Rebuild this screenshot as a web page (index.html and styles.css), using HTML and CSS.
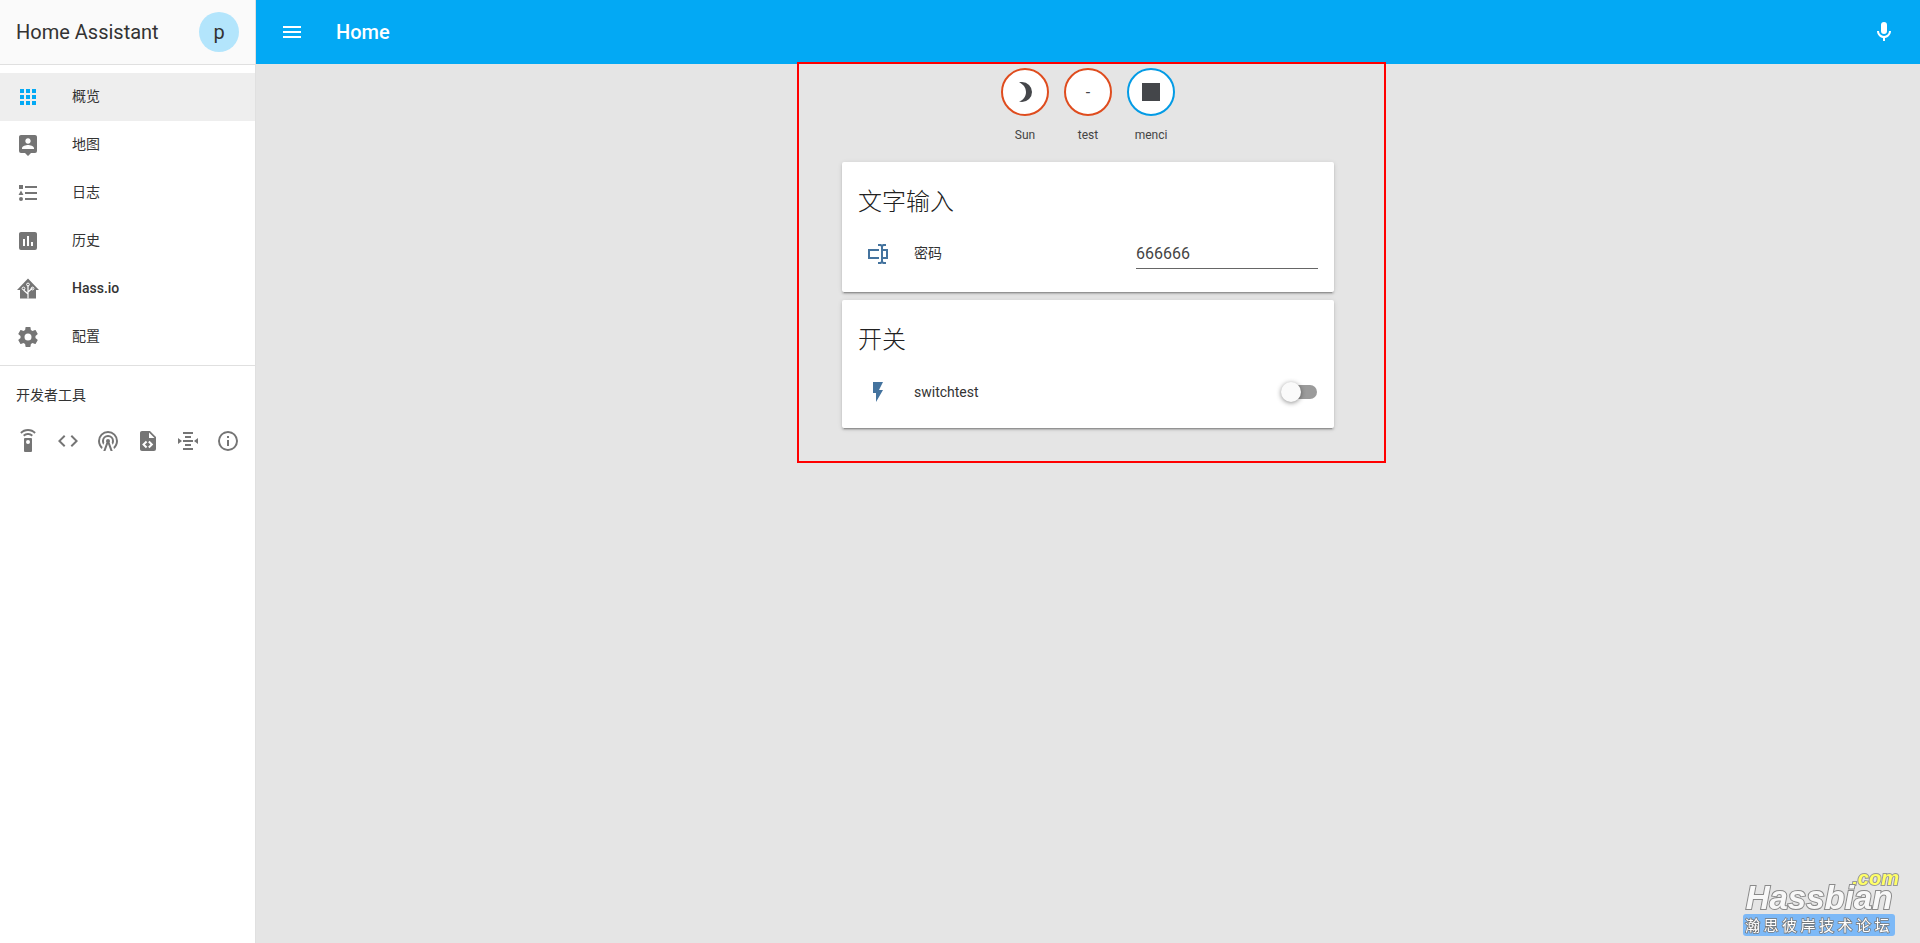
FILE: index.html
```html
<!DOCTYPE html>
<html lang="en">
<head>
    <meta charset="UTF-8">
    <meta name="viewport" content="width=device-width, initial-scale=1.0">
    <title>Home Assistant</title>
    <link rel="stylesheet" href="styles.css">
</head>
<body>
    <aside class="sidebar">
        <div class="sidebar-head">
            <span class="brand">Home Assistant</span>
            <span class="avatar">p</span>
        </div>
        <nav class="nav">
            <a class="nav-item selected">
                <svg class="icon" viewBox="0 0 24 24"><path d="M16,20H20V16H16M16,14H20V10H16M10,8H14V4H10M16,8H20V4H16M10,14H14V10H10M4,14H8V10H4M4,20H8V16H4M10,20H14V16H10M4,8H8V4H4V8Z"/></svg>
                <span class="cjk">概览</span>
            </a>
            <a class="nav-item">
                <svg class="icon" viewBox="0 0 24 24"><path d="M18,16H6V15.1C6,13.1 10,12 12,12C14,12 18,13.1 18,15.1M12,5.3C13.5,5.3 14.7,6.5 14.7,8C14.7,9.5 13.5,10.7 12,10.7C10.5,10.7 9.3,9.5 9.3,8C9.3,6.5 10.5,5.3 12,5.3M19,2H5C3.89,2 3,2.89 3,4V18A2,2 0 0,0 5,20H9L12,23L15,20H19A2,2 0 0,0 21,18V4C21,2.89 20.1,2 19,2Z"/></svg>
                <span class="cjk">地图</span>
            </a>
            <a class="nav-item">
                <svg class="icon" viewBox="0 0 24 24"><path d="M5,9.5L7.5,14H2.5L5,9.5M3,4H7V8H3V4M5,20A2,2 0 0,0 7,18A2,2 0 0,0 5,16A2,2 0 0,0 3,18A2,2 0 0,0 5,20M9,5V7H21V5H9M9,19H21V17H9V19M9,13H21V11H9V13Z"/></svg>
                <span class="cjk">日志</span>
            </a>
            <a class="nav-item">
                <svg class="icon" viewBox="0 0 24 24"><path d="M17,17H15V13H17M13,17H11V7H13M9,17H7V10H9M19,3H5C3.89,3 3,3.89 3,5V19A2,2 0 0,0 5,21H19A2,2 0 0,0 21,19V5C21,3.89 20.1,3 19,3Z"/></svg>
                <span class="cjk">历史</span>
            </a>
            <a class="nav-item">
                <svg class="icon" viewBox="0 0 24 24">
                    <path d="M12,1.5L1,13H4V21.5H20V13H23Z"/>
                    <path class="circuit" d="M12,21.5V8M12,17L8,13.5V12M12,15L16,11.5V12"/>
                    <circle class="node" cx="12" cy="7.5" r="1.4"/>
                    <circle class="node" cx="7.5" cy="11.5" r="1.4"/>
                    <circle class="node" cx="16.5" cy="11.5" r="1.4"/>
                </svg>
                <span class="latin">Hass.io</span>
            </a>
            <a class="nav-item">
                <svg class="icon" viewBox="0 0 24 24"><path d="M12,15.5A3.5,3.5 0 0,1 8.5,12A3.5,3.5 0 0,1 12,8.5A3.5,3.5 0 0,1 15.5,12A3.5,3.5 0 0,1 12,15.5M19.43,12.97C19.47,12.65 19.5,12.33 19.5,12C19.5,11.67 19.47,11.34 19.43,11L21.54,9.37C21.73,9.22 21.78,8.95 21.66,8.73L19.66,5.27C19.54,5.05 19.27,4.96 19.05,5.05L16.56,6.05C16.04,5.66 15.5,5.32 14.87,5.07L14.5,2.42C14.46,2.18 14.25,2 14,2H10C9.75,2 9.54,2.18 9.5,2.42L9.13,5.07C8.5,5.32 7.96,5.66 7.44,6.05L4.95,5.05C4.73,4.96 4.46,5.05 4.34,5.27L2.34,8.73C2.21,8.95 2.27,9.22 2.46,9.37L4.57,11C4.53,11.34 4.5,11.67 4.5,12C4.5,12.33 4.53,12.65 4.57,12.97L2.46,14.63C2.27,14.78 2.21,15.05 2.34,15.27L4.34,18.73C4.46,18.95 4.73,19.03 4.95,18.95L7.44,17.94C7.96,18.34 8.5,18.68 9.13,18.93L9.5,21.58C9.54,21.82 9.75,22 10,22H14C14.25,22 14.46,21.82 14.5,21.58L14.87,18.93C15.5,18.67 16.04,18.34 16.56,17.94L19.05,18.95C19.27,19.03 19.54,18.95 19.66,18.73L21.66,15.27C21.78,15.05 21.73,14.78 21.54,14.63L19.43,12.97Z"/></svg>
                <span class="cjk">配置</span>
            </a>
        </nav>
        <div class="dev-title">开发者工具</div>
        <div class="dev-tools">
            <span class="dev-btn"><svg class="icon" viewBox="0 0 24 24"><path d="M12,0C8.96,0 6.21,1.23 4.22,3.22L5.63,4.63C7.26,3 9.5,2 12,2C14.5,2 16.74,3 18.36,4.64L19.77,3.23C17.79,1.23 15.04,0 12,0M7.05,6.05L8.46,7.46C9.37,6.56 10.62,6 12,6C13.38,6 14.63,6.56 15.54,7.46L16.95,6.05C15.68,4.78 13.93,4 12,4C10.07,4 8.32,4.78 7.05,6.05M12,15A2,2 0 0,1 10,13A2,2 0 0,1 12,11A2,2 0 0,1 14,13A2,2 0 0,1 12,15M15,9H9A1,1 0 0,0 8,10V22A1,1 0 0,0 9,23H15A1,1 0 0,0 16,22V10A1,1 0 0,0 15,9Z"/></svg></span>
            <span class="dev-btn"><svg class="icon" viewBox="0 0 24 24"><path d="M14.6,16.6L19.2,12L14.6,7.4L16,6L22,12L16,18L14.6,16.6M9.4,16.6L4.8,12L9.4,7.4L8,6L2,12L8,18L9.4,16.6Z"/></svg></span>
            <span class="dev-btn"><svg class="icon" viewBox="0 0 24 24"><path d="M12,10A2,2 0 0,1 14,12C14,12.5 13.82,12.94 13.53,13.29L16.7,22H14.57L12,14.93L9.43,22H7.3L10.47,13.29C10.18,12.94 10,12.5 10,12A2,2 0 0,1 12,10M12,8A4,4 0 0,0 8,12C8,12.5 8.1,13 8.28,13.46L7.4,15.86C6.53,14.81 6,13.47 6,12A6,6 0 0,1 12,6A6,6 0 0,1 18,12C18,13.47 17.47,14.81 16.6,15.86L15.72,13.46C15.9,13 16,12.5 16,12A4,4 0 0,0 12,8M12,4A8,8 0 0,0 4,12C4,14.36 5,16.5 6.64,17.94L5.92,19.94C3.54,18.11 2,15.23 2,12A10,10 0 0,1 12,2A10,10 0 0,1 22,12C22,15.23 20.46,18.11 18.08,19.94L17.36,17.94C19,16.5 20,14.36 20,12A8,8 0 0,0 12,4Z"/></svg></span>
            <span class="dev-btn"><svg class="icon" viewBox="0 0 24 24"><path d="M13,9H18.5L13,3.5V9M6,2H14L20,8V20A2,2 0 0,1 18,22H6C4.89,22 4,21.1 4,20V4C4,2.89 4.89,2 6,2M6.12,15.5L9.86,19.24L11.28,17.83L8.95,15.5L11.28,13.17L9.86,11.76L6.12,15.5M17.28,15.5L13.54,11.76L12.12,13.17L14.45,15.5L12.12,17.83L13.54,19.24L17.28,15.5Z"/></svg></span>
            <span class="dev-btn"><svg class="icon" viewBox="0 0 24 24"><path d="M7,3H17V5H7ZM9,7H15V9H9ZM7,11H17V13H7ZM9,15H15V17H9ZM7,19H17V21H7ZM2,9L6,12L2,15ZM22,9L18,12L22,15Z"/></svg></span>
            <span class="dev-btn"><svg class="icon" viewBox="0 0 24 24"><path d="M11,9H13V7H11M12,20C7.59,20 4,16.41 4,12C4,7.59 7.59,4 12,4C16.41,4 20,7.59 20,12C20,16.41 16.41,20 12,20M12,2A10,10 0 0,0 2,12A10,10 0 0,0 12,22A10,10 0 0,0 22,12A10,10 0 0,0 12,2M11,17H13V11H11V17Z"/></svg></span>
        </div>
    </aside>

    <div class="main">
        <header class="toolbar">
            <svg class="icon" viewBox="0 0 24 24"><path d="M3,6H21V8H3V6M3,11H21V13H3V11M3,16H21V18H3V16Z"/></svg>
            <span class="toolbar-title">Home</span>
            <svg class="icon" viewBox="0 0 24 24"><path d="M12,2A3,3 0 0,1 15,5V11A3,3 0 0,1 12,14A3,3 0 0,1 9,11V5A3,3 0 0,1 12,2M19,11C19,14.53 16.39,17.44 13,17.93V21H11V17.93C7.61,17.44 5,14.53 5,11H7A5,5 0 0,0 12,16A5,5 0 0,0 17,11H19Z"/></svg>
        </header>

        <main class="content">
            <div class="badges">
                <div class="badge">
                    <div class="badge-ring alert"><svg class="icon" viewBox="0 0 24 24"><path d="M9,2C7.95,2 6.95,2.16 6,2.46C10.06,3.73 13,7.5 13,12C13,16.5 10.06,20.27 6,21.54C6.95,21.84 7.95,22 9,22A10,10 0 0,0 19,12A10,10 0 0,0 9,2Z"/></svg></div>
                    <div class="badge-label">Sun</div>
                </div>
                <div class="badge">
                    <div class="badge-ring alert">-</div>
                    <div class="badge-label">test</div>
                </div>
                <div class="badge">
                    <div class="badge-ring"><svg class="icon" viewBox="0 0 24 24"><path d="M3,3V21H21V3Z"/></svg></div>
                    <div class="badge-label">menci</div>
                </div>
            </div>

            <section class="card">
                <h2 class="card-title">文字输入</h2>
                <div class="row row-input">
                    <span class="row-icon"><svg class="icon" viewBox="0 0 24 24"><path d="M17,7H22V17H17V19A1,1 0 0,0 18,20H20V22H17.5C16.95,22 16,21.55 16,21C16,21.55 15.05,22 14.5,22H12V20H14A1,1 0 0,0 15,19V5A1,1 0 0,0 14,4H12V2H14.5C15.05,2 16,2.45 16,3C16,2.45 16.95,2 17.5,2H20V4H18A1,1 0 0,0 17,5V7M2,7H13V9H4V15H13V17H2V7M20,15V9H17V15H20Z"/></svg></span>
                    <span class="row-name row-name-cjk">密码</span>
                    <div class="text-field">666666</div>
                </div>
            </section>

            <section class="card">
                <h2 class="card-title">开关</h2>
                <div class="row">
                    <span class="row-icon"><svg class="icon" viewBox="0 0 24 24"><path d="M7,2V13H10V22L17,10H13L17,2H7Z"/></svg></span>
                    <span class="row-name">switchtest</span>
                    <div class="switch"><span class="switch-track"></span><span class="switch-thumb"></span></div>
                </div>
            </section>

            <div class="highlight"></div>
        </main>
    </div>

    <div class="watermark">
        <div class="wm-com">.com</div>
        <div class="wm-name">Hassbian</div>
        <div class="wm-tag">瀚思彼岸技术论坛</div>
    </div>
</body>
</html>
```

FILE: styles.css
```css
:root {
    --primary: #03a9f4;
    --icon-grey: #757575;
    --text: #212121;
    --state-icon: #44739e;
}

* {
    box-sizing: border-box;
}

html, body {
    height: 100%;
}

body {
    margin: 0;
    display: flex;
    overflow: hidden;
    background: #e5e5e5;
    color: var(--text);
    font-family: Roboto, "Noto Sans CJK SC", sans-serif;
    font-size: 14px;
}

.icon {
    display: block;
    width: 24px;
    height: 24px;
    fill: currentColor;
    flex: none;
}

/* sidebar */
.sidebar {
    width: 256px;
    flex: none;
    background: #fff;
    border-right: 1px solid #e0e0e0;
}

.sidebar-head {
    height: 65px;
    display: flex;
    align-items: center;
    justify-content: space-between;
    padding: 0 16px;
    background: #fafafa;
    border-bottom: 1px solid #e0e0e0;
}

.brand {
    font-size: 20px;
    color: #333;
}

.avatar {
    width: 40px;
    height: 40px;
    border-radius: 50%;
    background: #b3e5fc;
    display: flex;
    align-items: center;
    justify-content: center;
    font-size: 20px;
    color: #333;
}

.nav {
    padding: 8px 0 4px;
    border-bottom: 1px solid #e0e0e0;
}

.nav-item {
    display: flex;
    align-items: center;
    gap: 32px;
    height: 48px;
    padding-left: 16px;
    color: #333;
}

.nav-item .icon {
    color: var(--icon-grey);
}

.nav-item .cjk {
    padding-bottom: 4px;
}

.nav-item .latin {
    padding-bottom: 2px;
    font-weight: 500;
}

.nav-item.selected {
    background: #eeeeee;
}

.nav-item.selected .icon {
    color: var(--primary);
}

.circuit {
    fill: none;
    stroke: #fff;
    stroke-width: 1.2;
}

.node {
    fill: none;
    stroke: #fff;
    stroke-width: 1;
}

.dev-title {
    padding: 19px 16px 0;
    line-height: 20px;
    color: #333;
}

.dev-tools {
    display: flex;
    padding: 16px 8px 0;
}

.dev-btn {
    width: 40px;
    height: 40px;
    flex: none;
    display: flex;
    align-items: center;
    justify-content: center;
    color: var(--icon-grey);
}

/* main column */
.main {
    flex: 1;
    display: flex;
    flex-direction: column;
}

.toolbar {
    height: 64px;
    flex: none;
    display: flex;
    align-items: center;
    padding: 0 24px;
    background: var(--primary);
    color: #fff;
}

.toolbar-title {
    flex: 1;
    margin-left: 32px;
    font-size: 20px;
    font-weight: 500;
}

.content {
    position: relative;
    flex: 1;
    display: flex;
    flex-direction: column;
    align-items: center;
}

.badges {
    height: 98px;
    padding-top: 4px;
    display: flex;
    gap: 15px;
}

.badge {
    width: 48px;
    display: flex;
    flex-direction: column;
    align-items: center;
}

.badge-ring {
    width: 48px;
    height: 48px;
    border-radius: 50%;
    border: 2px solid #039be5;
    background: #fff;
    color: #44464a;
    font-size: 16px;
    display: flex;
    align-items: center;
    justify-content: center;
}

.badge-ring.alert {
    border-color: #df4c1e;
}

.badge-label {
    margin-top: 11px;
    font-size: 12px;
    line-height: 16px;
    white-space: nowrap;
    color: #444;
}

.card {
    width: 492px;
    margin-bottom: 8px;
    padding: 0 16px 16px;
    background: #fff;
    border-radius: 2px;
    box-shadow: 0 2px 2px 0 rgba(0,0,0,.14), 0 1px 5px 0 rgba(0,0,0,.12), 0 3px 1px -2px rgba(0,0,0,.2);
}

.card-title {
    margin: 0;
    padding: 24px 0 16px;
    font-size: 24px;
    font-weight: 300;
    line-height: 32px;
}

.row {
    display: flex;
    align-items: center;
    height: 40px;
}

.row-input {
    height: 42px;
    align-items: flex-start;
}

.row-icon {
    width: 40px;
    height: 40px;
    display: flex;
    align-items: center;
    justify-content: center;
    color: var(--state-icon);
}

.row-name {
    flex: 1;
    margin-left: 16px;
    line-height: 40px;
    color: #333;
}

.row-name-cjk {
    line-height: 38px;
}

.text-field {
    width: 182px;
    height: 35px;
    padding-top: 10px;
    font-size: 16px;
    line-height: 19px;
    color: #444;
    border-bottom: 1px solid #666;
}

.switch {
    position: relative;
    width: 36px;
    height: 20px;
    margin-right: 1px;
}

.switch-track {
    position: absolute;
    top: 3px;
    right: 0;
    width: 34px;
    height: 14px;
    border-radius: 7px;
    background: #9b9b9b;
}

.switch-thumb {
    position: absolute;
    top: 0;
    left: 0;
    width: 20px;
    height: 20px;
    border-radius: 50%;
    background: #fafafa;
    box-shadow: 0 1px 5px rgba(0,0,0,.45);
}

/* hand-drawn red box on the screenshot */
.highlight {
    position: absolute;
    top: -2px;
    left: 541px;
    width: 589px;
    height: 401px;
    border: 2px solid #f00;
    pointer-events: none;
}

/* forum watermark */
.watermark {
    position: fixed;
    right: 25px;
    bottom: 7px;
    width: 152px;
    font-family: "Liberation Sans", sans-serif;
}

.wm-com {
    height: 14px;
    margin-right: -4px;
    text-align: right;
    font-size: 20px;
    font-weight: bold;
    font-style: italic;
    line-height: 14px;
    color: #ffff66;
    -webkit-text-stroke: 2px #999;
    paint-order: stroke fill;
}

.wm-name {
    height: 26px;
    margin-bottom: 3px;
    text-align: center;
    font-size: 33px;
    font-weight: bold;
    font-style: italic;
    line-height: 26px;
    white-space: nowrap;
    color: #f8f8f8;
    -webkit-text-stroke: 2px #8a8a8a;
    paint-order: stroke fill;
}

.wm-tag {
    height: 22px;
    border-radius: 3px;
    background: #7db9f7;
    color: #fff;
    text-align: center;
    font-family: "Noto Sans CJK SC", sans-serif;
    font-size: 15px;
    line-height: 22px;
    letter-spacing: 3.5px;
    white-space: nowrap;
    -webkit-text-stroke: 1.5px #777;
    paint-order: stroke fill;
}
```
